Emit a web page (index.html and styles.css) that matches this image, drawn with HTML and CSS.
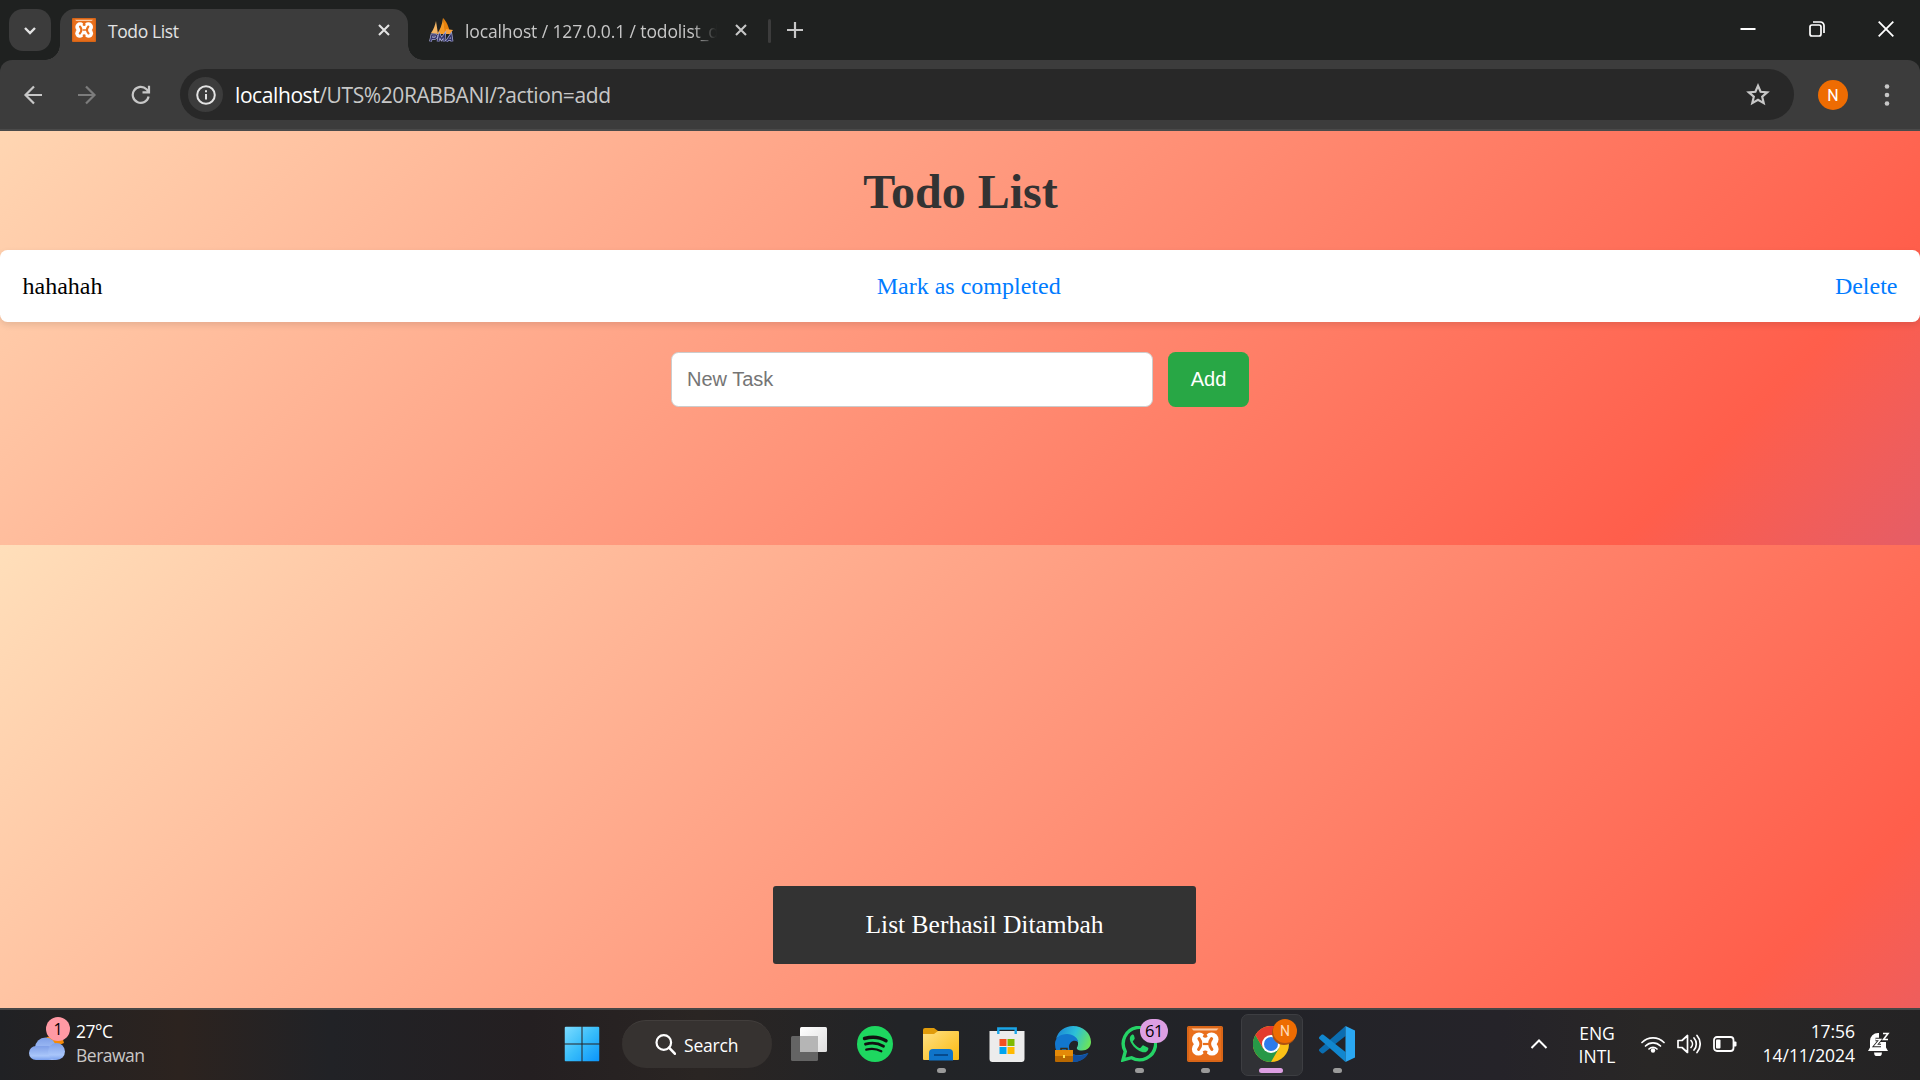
FILE: index.html
```html
<!DOCTYPE html>
<html lang="id">
<head>
<meta charset="utf-8">
<title>Todo List</title>
<link rel="stylesheet" href="styles.css">
</head>
<body>
<div class="screen">
  <header class="tabstrip">
    <button class="tab-search"><svg width="14" height="9" viewBox="0 0 14 9"><path d="M2 2l5 5 5-5" fill="none" stroke="#e3e3e3" stroke-width="2.4"/></svg></button>
    <div class="tab tab-active">
      <svg class="favicon" width="24" height="24" viewBox="0 0 36 36"><use href="#xampp"/></svg>
      <span class="tab-title">Todo List</span>
      <svg class="close" width="12" height="12" viewBox="0 0 12 12"><path d="M1 1l10 10M11 1L1 11" stroke="#e3e3e3" stroke-width="2.1"/></svg>
    </div>
    <div class="tab tab-idle">
      <svg class="favicon" width="25" height="24" viewBox="0 0 25 24">
        <path d="M2 15C5 11 6 7 7 3l2 13z" fill="#f5b562"/><path d="M8 16c3-4 5-9 6-16l3 16z" fill="#f79b25"/><path d="M14 0c4 4 6 9 7 16h-5z" fill="#e8820c"/><path d="M17 11l7 1-3 4h-5z" fill="#f9a13a"/>
        <path d="M1.500 23.500l1.500-6.500h3.500c2 0 1 3.500-1 3.500H3M9 23.500l1.500-6.500 2 4 3-4-.5 6.500M17.500 23.500l4.500-6.500 1 6.500m-3.500-2h3" fill="none" stroke="#a9abd6" stroke-width="2.800"/>
        <path d="M1.500 23.500l1.500-6.500h3.500c2 0 1 3.500-1 3.500H3M9 23.500l1.500-6.500 2 4 3-4-.5 6.500M17.500 23.500l4.500-6.500 1 6.500m-3.500-2h3" fill="none" stroke="#34356a" stroke-width="1.400"/>
      </svg>
      <span class="tab-title tab-title-faded">localhost / 127.0.0.1 / todolist_db</span>
      <svg class="close" width="12" height="12" viewBox="0 0 12 12"><path d="M1 1l10 10M11 1L1 11" stroke="#c7c7c7" stroke-width="2.1"/></svg>
    </div>
    <span class="tab-divider"></span>
    <svg class="new-tab" width="16" height="16" viewBox="0 0 16 16"><path d="M8 0v16M0 8h16" stroke="#c7c7c7" stroke-width="2.2"/></svg>
    <div class="window-buttons">
      <svg width="16" height="16" viewBox="0 0 16 16"><path d="M.5 8h15" stroke="#fff" stroke-width="2"/></svg>
      <svg width="16" height="16" viewBox="0 0 16 16"><rect x="1" y="4" width="11" height="11" rx="2" fill="none" stroke="#fff" stroke-width="1.7"/><path d="M4 1h7.500a3.500 3.500 0 0 1 3.500 3.500V12" fill="none" stroke="#fff" stroke-width="1.7"/></svg>
      <svg width="16" height="16" viewBox="0 0 16 16"><path d="M.7.7l14.600 14.600M15.300.7L.7 15.300" stroke="#fff" stroke-width="1.8"/></svg>
    </div>
  </header>

  <nav class="toolbar">
    <div class="nav-buttons">
      <svg width="20" height="20" viewBox="0 0 20 20"><path d="M19 10H3M11 1.500L2.500 10l8.500 8.500" fill="none" stroke="#c7c7c7" stroke-width="2.200"/></svg>
      <svg width="20" height="20" viewBox="0 0 20 20"><path d="M1 10h16M9 1.500l8.500 8.500L9 18.500" fill="none" stroke="#7c7c7c" stroke-width="2.200"/></svg>
      <svg width="20" height="20" viewBox="0 0 20 20"><path d="M17.600 11.500A8 8 0 1 1 15.500 4.300L18 7M18 .8V7.300h-6.500" fill="none" stroke="#c7c7c7" stroke-width="2.200"/></svg>
    </div>
    <div class="omnibox">
      <span class="site-info"><svg width="20" height="20" viewBox="0 0 20 20"><circle cx="10" cy="10" r="8.800" fill="none" stroke="#e3e3e3" stroke-width="2"/><path d="M10 9v5.500M10 5.300v2" stroke="#e3e3e3" stroke-width="2"/></svg></span>
      <span class="url"><span class="host">localhost</span>/UTS%20RABBANI/?action=add</span>
      <svg class="star" width="24" height="23" viewBox="0 0 24 23"><path d="M12 2.800l2.600 6 6.600.6-5 4.300 1.500 6.400L12 16.700l-5.700 3.400 1.500-6.400-5-4.300 6.600-.6z" fill="none" stroke="#c7c7c7" stroke-width="2.200"/></svg>
    </div>
    <span class="avatar">N</span>
    <svg class="kebab" width="6" height="22" viewBox="0 0 6 22"><g fill="#c7c7c7"><circle cx="3" cy="2.500" r="2.300"/><circle cx="3" cy="11" r="2.300"/><circle cx="3" cy="19.500" r="2.300"/></g></svg>
  </nav>

  <main class="page">
    <h1>Todo List</h1>
    <div class="task">
      <span>hahahah</span>
      <a>Mark as completed</a>
      <a>Delete</a>
    </div>
    <form class="add-form">
      <input type="text" placeholder="New Task">
      <button type="button">Add</button>
    </form>
    <div class="snackbar">List Berhasil Ditambah</div>
  </main>

  <footer class="taskbar">
    <div class="weather">
      <div class="weather-icon">
        <svg width="37" height="26" viewBox="0 0 37 26">
          <defs><linearGradient id="cloud" x1="0" y1="0" x2="0" y2="1"><stop offset="0" stop-color="#7f9fe8"/><stop offset=".7" stop-color="#a9c6fa"/><stop offset="1" stop-color="#7aa0ee"/></linearGradient></defs>
          <path d="M17 1l16-1 2 7-7 3z" fill="#f58a07"/>
          <circle cx="16.500" cy="12" r="10.500" fill="url(#cloud)"/>
          <path d="M7 10h20v14H7z" fill="#9dbbf6"/>
          <rect x="0" y="10" width="26" height="14" rx="7" fill="url(#cloud)"/>
          <circle cx="27.500" cy="15.500" r="8.500" fill="url(#cloud)"/>
        </svg>
        <span class="weather-badge">1</span>
      </div>
      <div class="weather-text"><span>27°C</span><span class="muted">Berawan</span></div>
    </div>

    <div class="apps">
      <div class="app"><svg width="36" height="36" viewBox="0 0 36 36">
        <defs><linearGradient id="win" x1="0" y1="0" x2="1" y2="1"><stop offset="0" stop-color="#7ddcff"/><stop offset=".5" stop-color="#38bdfa"/><stop offset="1" stop-color="#0a94fb"/></linearGradient>
        <clipPath id="panes"><rect x=".5" y=".5" width="17" height="17"/><rect x="18.500" y=".5" width="17" height="17"/><rect x=".5" y="18.500" width="17" height="17"/><rect x="18.500" y="18.500" width="17" height="17"/></clipPath></defs>
        <rect x=".5" y=".5" width="35" height="35" rx="1.500" fill="url(#win)" clip-path="url(#panes)"/></svg></div>
      <div class="search"><svg width="21" height="21" viewBox="0 0 21 21"><circle cx="8.800" cy="8.500" r="7.300" fill="none" stroke="#fff" stroke-width="2.200"/><path d="M14 13.700l5.800 6" stroke="#fff" stroke-width="2.600" stroke-linecap="round"/></svg><span>Search</span></div>
      <div class="app"><svg width="36" height="36" viewBox="0 0 36 36">
        <defs><linearGradient id="tvw" x1="0" y1="0" x2="1" y2="1"><stop offset="0" stop-color="#fff"/><stop offset="1" stop-color="#dedede"/></linearGradient></defs>
        <rect x="9" y="1" width="27" height="25" rx="1.500" fill="url(#tvw)"/><rect x="0" y="10" width="27" height="25" rx="1.500" fill="#646464"/><path d="M9 10h18v16H9z" fill="#b5b5b5"/></svg></div>
      <div class="app"><svg width="36" height="36" viewBox="0 0 36 36"><circle cx="18" cy="18" r="18" fill="#1ed760"/><g fill="none" stroke="#111" stroke-linecap="round"><path d="M7.500 12.500c7-2 15.500-1.300 21.500 2.300" stroke-width="3.400"/><path d="M8.500 18.200c6.500-1.800 12.800-1 18 2" stroke-width="2.800"/><path d="M9.300 23.600c5.500-1.500 10.500-.8 15 1.700" stroke-width="2.300"/></g></svg></div>
      <div class="app running"><svg width="36" height="36" viewBox="0 0 36 36">
        <defs><linearGradient id="folder" x1="0" y1="0" x2="1" y2="1"><stop offset="0" stop-color="#ffe184"/><stop offset="1" stop-color="#fbb90f"/></linearGradient></defs>
        <path d="M0 4a2 2 0 0 1 2-2h9l4 3v7H0z" fill="#e19c0b"/><path d="M0 8h11l4-3h20a1 1 0 0 1 1 1v27a1 1 0 0 1-1 1H1a1 1 0 0 1-1-1z" fill="url(#folder)"/><path d="M6 34.500V27a4 4 0 0 1 4-4h16a4 4 0 0 1 4 4v7.500z" fill="#0f74c9"/><path d="M11 29h14" stroke="#064a8c" stroke-width="2"/></svg></div>
      <div class="app"><svg width="36" height="36" viewBox="0 0 36 36">
        <path d="M9.300 8V2.500h17.400V8" fill="none" stroke="#1aa5e8" stroke-width="2.400"/><path d="M.5 5h35v28a3 3 0 0 1-3 3h-29a3 3 0 0 1-3-3z" fill="#ececec"/><path d="M9.300 5v3M26.700 5v3" stroke="#1aa5e8" stroke-width="2.400"/><path d="M10.500 13h7v7h-7z" fill="#f25022"/><path d="M18.500 13h7v7h-7z" fill="#7fba00"/><path d="M10.500 21h7v7h-7z" fill="#00a4ef"/><path d="M18.500 21h7v7h-7z" fill="#ffb900"/></svg></div>
      <div class="app"><svg width="36" height="36" viewBox="0 0 36 36">
        <defs><linearGradient id="edge" x1="0" y1=".3" x2="1" y2=".6"><stop offset="0" stop-color="#1b87d6"/><stop offset=".5" stop-color="#2cc0d8"/><stop offset="1" stop-color="#6be45a"/></linearGradient></defs>
        <path d="M1 13C3 5 10 0 18 0c10 0 18 7 18 16 0 5-4 8.500-9 8.500-5 0-6-2-4.500-4C25 15 20 9 12 9 7 9 3 11 1 13z" fill="url(#edge)"/>
        <path d="M0 18c0-6 5-10 12-10 6 0 11 4 11 8-4-3-9 0-9 5 0 7 6 11 19 6-3 6-9 9-15 9C8 36 0 28 0 18z" fill="#1277cf"/>
        <path d="M14 21c0 7 7 9 12 8.500 3-.3 5-1.500 7.500-2.500C31 33 24 36 18 36z" fill="#124f9f"/>
        <path d="M6 25v-2.500h6V25" fill="none" stroke="#3a2a12" stroke-width="1.500"/><rect y="24" width="18" height="12" rx="1" fill="#b96800"/><path d="M0 24h18v6H0z" fill="#e48a08"/><path d="M8 29h2v3H8z" fill="#ffe14a"/></svg></div>
      <div class="app running"><svg width="36" height="36" viewBox="0 0 36 36">
        <path d="M2 34l2.300-8.500A16.200 16.200 0 1 1 10.500 31.700z" fill="none" stroke="#25d366" stroke-width="3.400"/><path d="M13 9.500c-.6-1.200-1.400-1.200-2.400-.6-2.600 2-2 5.200-.4 8 3 5 7 8 11.500 9.300 3 .7 5.600-1.200 5.700-3.800 0-.6-.3-.8-.8-1l-4-2c-.7-.3-1-.1-1.500.5l-1.500 1.800c-.4.5-.8.5-1.400.2-2.800-1.300-5-3.500-6.200-5.900-.3-.6-.1-.9.300-1.300 1.200-1.300 1.700-2 1.300-2.900z" fill="#25d366"/></svg><span class="badge badge-count">61</span></div>
      <div class="app running"><svg width="36" height="36" viewBox="0 0 36 36">
        <g id="xampp"><rect width="36" height="36" rx="2" fill="#e96f1c"/><rect x="1" y="1" width="34" height="34" rx="1.500" fill="none" stroke="#c85c12"/><path d="M4.500 2.500h27l-2 2h-23z" fill="#fac9a3"/>
        <g fill="#fff"><circle cx="12" cy="13.500" r="7"/><circle cx="24.500" cy="13.500" r="7"/><circle cx="11.500" cy="23" r="6.600"/><circle cx="25" cy="23" r="6.600"/><path d="M12 11.500h12v14H12z"/></g>
        <path d="M18.200 6l2.500 4.500c-1.500 1.800-3.500 1.800-5 0zM18.200 30.500l2.500-5c-1.500-1.500-3.500-1.500-5 0z" fill="#e96f1c"/>
        <path d="M12 12.800c2.400 3 2.400 7.400-.3 10.400M24.500 12.800c-2.400 3-2.400 7.400.3 10.400" fill="none" stroke="#e96f1c" stroke-width="3.200" stroke-linecap="round"/><path d="M16 18h6.500" stroke="#e96f1c" stroke-width="2.200"/></g></svg></div>
      <div class="app running active"><svg width="36" height="36" viewBox="0 0 36 36">
        <circle cx="18" cy="18" r="18" fill="#fbc116"/><path d="M2.400 9A18 18 0 0 0 18 36l7.800-13.500H10.200z" fill="#279847"/><path d="M2.400 9a18 18 0 0 1 31.200 0H18l-7.800 13.500z" fill="#e33b2e"/><circle cx="18" cy="18" r="9" fill="#fff"/><circle cx="18" cy="18" r="7" fill="#2d7bea"/></svg><span class="badge badge-profile">N</span></div>
      <div class="app running"><svg width="36" height="36" viewBox="0 0 36 36">
        <path d="M26.500 0v10L4.500 27.200c-.7.500-1.500.5-2.200-.1L.5 25.300c-.7-.7-.7-1.700 0-2.300z" fill="#0b6db0"/><path d="M26.500 36V26L4.500 8.800c-.7-.5-1.500-.5-2.200.1L.5 10.700c-.7.700-.7 1.700 0 2.300z" fill="#1187cf"/><path d="M26.500 0L36 4.500v27L26.500 36z" fill="#2aa7f2"/></svg></div>
    </div>

    <div class="tray">
      <svg class="tray-up" width="18" height="10" viewBox="0 0 18 10"><path d="M1.500 9L9 1.500 16.500 9" fill="none" stroke="#fff" stroke-width="2"/></svg>
      <div class="lang"><span>ENG</span><span>INTL</span></div>
      <div class="status">
        <svg width="24" height="18" viewBox="0 0 24 18"><g fill="none" stroke="#fff" stroke-width="1.700" stroke-linecap="round"><path d="M1 7.500a15.500 15.500 0 0 1 22 0"/><path d="M4.500 11a10.600 10.600 0 0 1 15 0"/><path d="M8 14a5.700 5.700 0 0 1 8 0"/></g><circle cx="12" cy="15.500" r="2.200" fill="#fff"/></svg>
        <svg width="24" height="20" viewBox="0 0 24 20"><g fill="none" stroke="#fff" stroke-width="1.700" stroke-linecap="round" stroke-linejoin="round"><path d="M1 6.500h4L10.500 1.500v17L5 13.500H1z"/><path d="M14 6.500a5 5 0 0 1 0 7M17 4a9 9 0 0 1 0 12M20 1.500a13 13 0 0 1 0 17"/></g></svg>
        <svg width="24" height="16" viewBox="0 0 24 16"><rect x="1" y="1" width="19.500" height="14" rx="3" fill="none" stroke="#fff" stroke-width="1.800"/><rect x="3" y="3.500" width="4.500" height="9" rx="1" fill="#fff"/><path d="M21 5.500h1.500a1 1 0 0 1 1 1v3a1 1 0 0 1-1 1H21z" fill="#fff"/></svg>
      </div>
      <div class="clock"><span>17:56</span><span>14/11/2024</span></div>
      <svg class="bell" width="22" height="24" viewBox="0 0 22 24"><path d="M0 19l2-3.500V9a8 8 0 0 1 8-8h1v9h7v5.500l2 3.500z" fill="#fff"/><path d="M6 20.500h8a4 4 0 0 1-8 0z" fill="#fff"/><path d="M7.500 7.500h5l-5 6H13M15 1.500h5l-4.500 6H20" fill="none" stroke="#272626" stroke-width="3.400"/><path d="M7.500 7.500h5l-5 6H13M15 1.500h5l-4.500 6H20" fill="none" stroke="#fff" stroke-width="1.600"/></svg>
    </div>
  </footer>
</div>
</body>
</html>
```
FILE: styles.css
```css
* { box-sizing: border-box; }
body {
  margin: 0;
  font-family: "Open Sans", "Noto Sans", sans-serif;
}
svg { display: block; flex: none; }
.screen {
  width: 1920px;
  height: 1080px;
  display: flex;
  flex-direction: column;
  overflow: hidden;
  background: #1f2120;
}

/* Tab strip */
.tabstrip {
  height: 60px;
  flex: none;
  display: flex;
  padding: 9px 24px 0 9px;
  color: #c7c7c7;
}
.tab-search {
  width: 42px;
  height: 42px;
  padding: 0;
  border: 0;
  border-radius: 14px;
  background: #3c3c3c;
  display: grid;
  place-items: center;
}
.tab {
  height: 51px;
  display: flex;
  align-items: center;
  padding-bottom: 9px;
  font-size: 17.500px;
  white-space: nowrap;
}
.tab-active {
  position: relative;
  width: 348px;
  margin-left: 9px;
  padding-left: 12px;
  padding-right: 18px;
  border-radius: 15px 15px 0 0;
  background: #3c3c3c;
  color: #e3e3e3;
}
.tab-active::before,
.tab-active::after {
  content: "";
  position: absolute;
  bottom: 0;
  width: 15px;
  height: 15px;
}
.tab-active::before {
  left: -15px;
  background: radial-gradient(circle at 0 0, transparent 14.500px, #3c3c3c 15px);
}
.tab-active::after {
  right: -15px;
  background: radial-gradient(circle at 100% 0, transparent 14.500px, #3c3c3c 15px);
}
.tab-idle {
  width: 341px;
  padding-left: 21px;
  padding-right: 1px;
}
.tab-title {
  flex: 1;
  margin-left: 12px;
  padding-top: 1px;
  letter-spacing: -0.400px;
}
.tab-title-faded {
  flex: none;
  width: 252px;
  margin-left: 11px;
  margin-right: 18px;
  overflow: hidden;
  letter-spacing: -0.120px;
  -webkit-mask-image: linear-gradient(90deg, #000 90%, transparent);
  mask-image: linear-gradient(90deg, #000 90%, transparent);
}
.tab-divider {
  width: 3px;
  height: 24px;
  margin: 10px 16px 0 19px;
  border-radius: 2px;
  background: #3c3c3c;
}
.new-tab { margin-top: 13px; }
.window-buttons {
  margin-left: auto;
  display: flex;
  gap: 53px;
  padding: 12px 2px 0 0;
}

/* Toolbar */
.toolbar {
  height: 71px;
  flex: none;
  display: flex;
  align-items: center;
  padding: 0 30px 0 23px;
  border-bottom: 2px solid #4a4a4a;
  border-radius: 12px 12px 0 0;
  background: #3c3c3c;
}
.nav-buttons {
  display: flex;
  gap: 34px;
  width: 157px;
}
.omnibox {
  width: 1614px;
  height: 51px;
  display: flex;
  align-items: center;
  padding: 0 24px 0 8px;
  border-radius: 26px;
  background: #282828;
}
.site-info {
  width: 35px;
  height: 35px;
  border-radius: 50%;
  background: #3c3c3c;
  display: grid;
  place-items: center;
}
.url {
  margin-left: 12px;
  color: #c7c7c7;
  font-size: 21px;
  letter-spacing: -0.410px;
}
.host { color: #fff; }
.star { margin-left: auto; }
.avatar {
  width: 30px;
  height: 30px;
  margin-left: 24px;
  border-radius: 50%;
  background: #ee6c02;
  color: #fff;
  font: 16px/31px Roboto, sans-serif;
  text-align: center;
}
.kebab { margin-left: auto; }

/* Todo page */
.page {
  position: relative;
  height: 877px;
  flex: none;
  background: linear-gradient(135deg, #ffdfba 0, #ff5e4b 1549px, #e55d66 100%) 0 -156px / 1920px 570px;
  font-family: "Liberation Serif", "Times New Roman", serif;
  font-size: 24px;
}
h1 {
  margin: 0;
  padding: 33px 0 31px 1px;
  color: #333;
  font-size: 48px;
  line-height: 55px;
  text-align: center;
}
.task {
  height: 72px;
  display: flex;
  align-items: center;
  justify-content: space-between;
  padding: 0 22.500px;
  border-radius: 7.500px;
  background: #fff;
  box-shadow: 0 3px 7.500px rgba(0, 0, 0, .1);
  color: #000;
}
.task a { color: #007bff; }
.add-form {
  display: flex;
  justify-content: center;
  gap: 15px;
  margin-top: 30px;
}
.add-form input,
.add-form button {
  height: 55px;
  margin: 0;
  border-radius: 7.500px;
  font: 20px "Liberation Sans", Arial, sans-serif;
}
.add-form input {
  width: 482px;
  padding: 0 15px;
  border: 1px solid #ccc;
  background: #fff;
}
.add-form input::placeholder { color: #757575; }
.add-form button {
  width: 81px;
  padding: 0;
  border: 0;
  background: #28a745;
  color: #fff;
}
.snackbar {
  position: absolute;
  left: 773px;
  bottom: 44px;
  width: 423px;
  height: 78px;
  border-radius: 3px;
  background: #333;
  color: #fff;
  font-size: 25.500px;
  line-height: 77px;
  text-align: center;
}

/* Taskbar */
.taskbar {
  height: 72px;
  flex: none;
  display: grid;
  grid-template-columns: 549px 1fr 400px;
  border-top: 2px solid #464646;
  background: linear-gradient(90deg, #202124 0, #2c231f 180px, #212226 330px, #241f21 530px, #2a2523 700px, #222427 900px, #222328 1250px, #252329 1500px, #292726 1650px, #242324 1920px);
  color: #fff;
  font-size: 17.500px;
}
.weather {
  display: flex;
  padding: 7px 0 0 29px;
}
.weather-icon {
  position: relative;
  width: 37px;
  padding-top: 19px;
}
.weather-badge {
  position: absolute;
  top: 0;
  left: 17px;
  width: 24px;
  height: 24px;
  border-radius: 50%;
  background: #ff99a4;
  color: #000;
  font-size: 16px;
  line-height: 24px;
  text-align: center;
}
.weather-text {
  display: flex;
  flex-direction: column;
  padding: 2px 0 0 10px;
  line-height: 24px;
  letter-spacing: -0.500px;
}
.muted { color: #c9c7c6; }
.apps { display: flex; align-items: flex-start; }
.app {
  position: relative;
  width: 66px;
  height: 70px;
  flex: none;
  display: grid;
  justify-items: center;
  align-content: start;
  padding-top: 16px;
}
.search {
  width: 150px;
  height: 48px;
  margin: 10px 4px 0 7px;
  padding-left: 33px;
  display: flex;
  align-items: center;
  gap: 8px;
  border-radius: 24px;
  border-top: 1px solid #423e3c;
  background: #363230;
  letter-spacing: -0.200px;
}
.running::after {
  content: "";
  width: 9px;
  height: 5px;
  margin-top: 6px;
  border-radius: 3px;
  background: #9a9a9a;
}
.active::before {
  content: "";
  position: absolute;
  left: 3px;
  top: 4px;
  width: 60px;
  height: 60px;
  border: 1px solid #3d3e42;
  border-radius: 7px;
  background: #303135;
}
.active svg { position: relative; }
.active::after {
  position: relative;
  width: 24px;
  background: #dd9fe3;
}
.badge {
  position: absolute;
  top: 9px;
  border-radius: 12px;
  height: 24px;
  line-height: 24px;
  text-align: center;
}
.badge-count {
  left: 34px;
  width: 28px;
  background: #dd9fe3;
  color: #000;
  font-size: 16.500px;
  letter-spacing: -0.500px;
}
.badge-profile {
  left: 35px;
  width: 24px;
  background: #ee6c02;
  box-shadow: -1px 2px 0 #ad5212;
  color: #ffd9b8;
  font: 14px/24px Roboto, sans-serif;
}
.tray {
  display: flex;
  align-items: flex-start;
}
.tray-up { margin: 29px 0 0 10px; }
.lang {
  width: 56px;
  margin-left: 21px;
  padding-top: 12px;
  display: flex;
  flex-direction: column;
  line-height: 23px;
  text-align: center;
}
.status {
  display: flex;
  align-items: center;
  gap: 12px;
  margin: 24px 0 0 16px;
}
.clock {
  width: 106px;
  margin-left: 12px;
  padding-top: 9px;
  display: flex;
  flex-direction: column;
  line-height: 24px;
  text-align: right;
  letter-spacing: -0.050px;
}
.bell { margin: 22px 0 0 13px; }
```
